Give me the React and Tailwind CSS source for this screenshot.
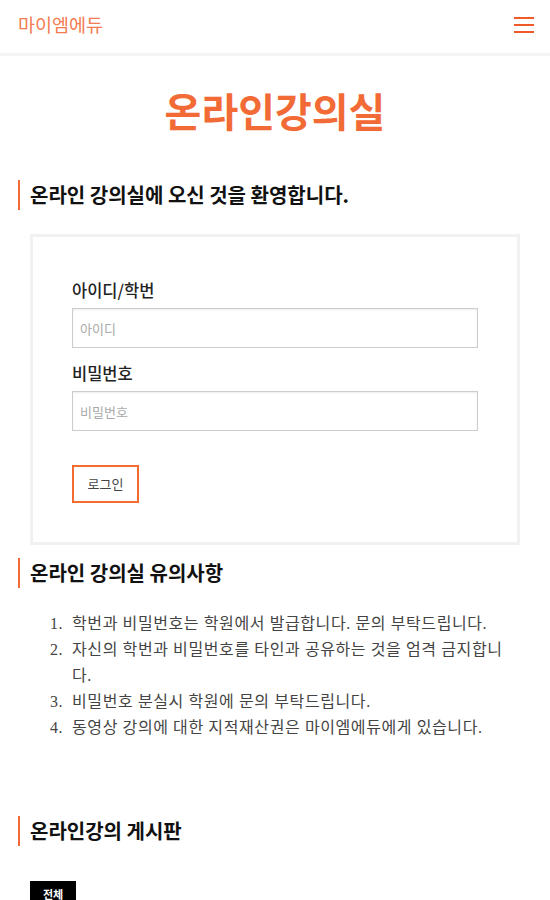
export default function App() {
    const notices = [
        "학번과 비밀번호는 학원에서 발급합니다. 문의 부탁드립니다.",
        "자신의 학번과 비밀번호를 타인과 공유하는 것을 엄격 금지합니다.",
        "비밀번호 분실시 학원에 문의 부탁드립니다.",
        "동영상 강의에 대한 지적재산권은 마이엠에듀에게 있습니다.",
    ]

    const sans = { fontFamily: '"Noto Sans CJK KR", "Noto Sans", sans-serif' }

    return (
        <div className="min-h-[900px] bg-white text-[#222]" style={sans}>
            {/* Top bar */}
            <header className="flex h-[56px] items-center justify-between border-b-[3px] border-[#f5f5f5] px-[18px] pb-[3px]">
                <span className="text-[18.5px] text-[#f47b52]">마이엠에듀</span>
                <button className="flex w-[20px] flex-col gap-[4.5px] mr-[-2px]">
                    <span className="h-[2.5px] w-full bg-[#f05a28]" />
                    <span className="h-[2.5px] w-full bg-[#f05a28]" />
                    <span className="h-[2.5px] w-full bg-[#f05a28]" />
                </button>
            </header>

            <main className="px-[18px]">
                <h1 className="mt-[30px] text-center text-[40px] font-bold leading-[48px] text-[#f26a36]">
                    온라인강의실
                </h1>

                <h2 className="mt-[46px] border-l-[2.5px] border-[#f26a36] pl-[10px] text-[20px] font-semibold leading-[30px] text-[#111]">
                    온라인 강의실에 오신 것을 환영합니다.
                </h2>

                {/* Login card */}
                <div className="mx-[12px] mt-[24px] border-[3px] border-[#f1f1f1] px-[39px] pb-[39px] pt-[42px]">
                    <label className="block text-[16.5px] font-medium leading-[22px] text-[#222]">아이디/학번</label>
                    <input
                        type="text"
                        placeholder="아이디"
                        className="mt-[7px] block h-[40px] w-full border border-[#cdcdcd] px-[7px] text-[13px] shadow-[inset_0_1px_2px_rgba(0,0,0,0.08)] outline-none placeholder:text-[#aaa]"
                    />
                    <label className="mt-[14px] block text-[16.5px] font-medium leading-[22px] text-[#222]">비밀번호</label>
                    <input
                        type="password"
                        placeholder="비밀번호"
                        className="mt-[7px] block h-[40px] w-full border border-[#cdcdcd] px-[7px] text-[13px] shadow-[inset_0_1px_2px_rgba(0,0,0,0.08)] outline-none placeholder:text-[#aaa]"
                    />
                    <button className="mt-[34px] block h-[38px] w-[67px] border-2 border-[#f26b2f] text-[13px] text-[#444]">
                        로그인
                    </button>
                </div>

                <h2 className="mt-[13px] border-l-[2.5px] border-[#f26a36] pl-[10px] text-[20px] font-semibold leading-[30px] text-[#111]">
                    온라인 강의실 유의사항
                </h2>

                <ol
                    className="mt-[23px] w-[490px] pl-[32px] text-[16px] leading-[26px] tracking-[0.6px] text-[#444]"
                    style={{ fontFamily: '"Liberation Serif", "Noto Sans CJK KR", serif' }}
                >
                    {notices.map((n, i) => (
                        <li key={i} className="flex">
                            <span className="w-[22px] shrink-0">{i + 1}.</span>
                            <span>{n}</span>
                        </li>
                    ))}
                </ol>

                <h2 className="mt-[75px] border-l-[2.5px] border-[#f26a36] pl-[10px] text-[20px] font-semibold leading-[30px] text-[#111]">
                    온라인강의 게시판
                </h2>

                <div className="ml-[12px] mt-[35px] flex">
                    <span className="flex h-[28px] w-[46px] items-start justify-center bg-black pt-[6px] text-[11px] font-bold leading-[14px] text-white">
                        전체
                    </span>
                </div>
            </main>
        </div>
    )
}
